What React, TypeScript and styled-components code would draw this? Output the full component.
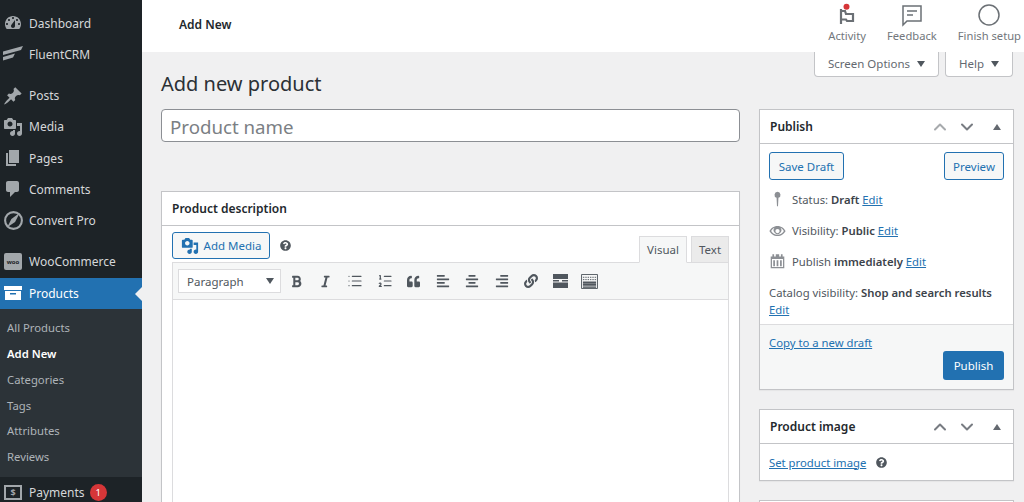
import React from "react";
import styled, { createGlobalStyle } from "styled-components";
import { ChevronUp, ChevronDown, List, ListOrdered } from "lucide-react";
import { FaBold, FaItalic, FaQuoteLeft, FaAlignLeft, FaAlignCenter, FaAlignRight, FaLink, FaQuestionCircle } from "react-icons/fa";

const Global = createGlobalStyle`
  html, body { margin: 0; padding: 0; height: 100%; overflow: hidden; }
  body { font-family: "Noto Sans", "Open Sans", "Liberation Sans", sans-serif; font-size: 12px; color: #3c434a; background: #f0f0f1; }
  * { box-sizing: border-box; }
`;

const Shell = styled.div`display: grid; grid-template-columns: 142px 1fr; width: 1024px; height: 502px; overflow: hidden;`;
const Sidebar = styled.nav`background: #1d2327; padding-top: 7.5px; display: flex; flex-direction: column; height: 502px; overflow: hidden;`;
const MenuItem = styled.div<{ $active?: boolean; $gap?: boolean }>`
  position: relative; flex: none; height: 31.25px; display: flex; align-items: center; font-size: 12px;
  margin-top: ${p => (p.$gap ? "10px" : "0")};
  background: ${p => (p.$active ? "#2271b1" : "transparent")};
  color: ${p => (p.$active ? "#fff" : "#d5d7d9")};
  ${p => p.$active && `&::after { content: ""; position: absolute; right: 0; top: 9px; border: 7px solid transparent; border-right-color: #f0f0f1; border-left-width: 0; }`}
`;
const MenuIcon = styled.span<{ $active?: boolean }>`
  width: 29px; flex: none; display: flex; justify-content: center; padding-right: 3px; color: ${p => (p.$active ? "#fff" : "#a2a7ab")};
`;
const SubMenu = styled.div`flex: none; height: 168.500px; background: #2c3338; padding-top: 6px; display: flex; flex-direction: column;`;
const SubItem = styled.div<{ $current?: boolean }>`
  height: 25.8px; display: flex; align-items: center; padding-left: 7px; font-size: 11.3px;
  color: ${p => (p.$current ? "#fff" : "#aeb3b8")}; font-weight: ${p => (p.$current ? 600 : 400)};
`;
const Badge = styled.span`
  margin-left: 5px; width: 17px; height: 17px; border-radius: 50%; background: #d63638; color: #fff; font-size: 9.5px;
  display: flex; align-items: center; justify-content: center;
`;
const WooMark = styled.span`
  width: 18px; height: 17px; background: #a2a7ab; border-radius: 2px; color: #1d2327; font-size: 6px; font-weight: 700; display: flex; align-items: center; justify-content: center;
`;
const PayMark = styled.span`
  width: 18px; height: 15px; border: 2px solid #a2a7ab; color: #a2a7ab; font-size: 9px; font-weight: 700; line-height: 1; display: flex; align-items: center; justify-content: center;
`;

const Main = styled.main`display: flex; flex-direction: column; min-width: 0;`;
const TopBar = styled.header`flex: none; height: 52px; background: #fff; display: flex; align-items: flex-start; justify-content: space-between; padding: 0 3px 0 37px;`;
const PageCrumb = styled.span`font-size: 12px; font-weight: 600; color: #23282d; line-height: 50px;`;
const Activities = styled.div`display: flex; gap: 21px; align-items: flex-start; padding-top: 3px;`;
const Activity = styled.div`display: flex; flex-direction: column; align-items: center; color: #72777c; font-size: 11.2px; line-height: 16px; gap: 1px;`;
const MetaRow = styled.div`flex: none; height: 25px; display: flex; justify-content: flex-end; gap: 6px; padding-right: 11px;`;
const MetaTab = styled.div`
  background: #fff; border: 1px solid #c3c4c7; border-top: 0; border-radius: 0 0 4px 4px; display: flex; align-items: center; justify-content: center;
  font-size: 11.5px; color: #646970; gap: 7px; padding-bottom: 1px;
`;
const ScreenTab = styled(MetaTab)`width: 125px;`;
const HelpTab = styled(MetaTab)`width: 68px;`;
const Caret = styled.i`width: 0; height: 0; border: 4px solid transparent; border-top: 6px solid #50575e; border-bottom: 0;`;
const Title = styled.h1`margin: -9.5px 0 0 19px; font-size: 20px; font-weight: 400; line-height: 31px; color: #2b3035;`;
const Columns = styled.div`display: grid; grid-template-columns: 579px 255px; gap: 19px; margin: 10.5px 0 0 19px; align-items: start;`;
const LeftCol = styled.div`display: flex; flex-direction: column; gap: 49px;`;
const RightCol = styled.div`display: flex; flex-direction: column; gap: 19px;`;
const NameInput = styled.input`
  height: 33px; width: 100%; border: 1px solid #8c8f94; border-radius: 4px; background: #fff; font: inherit; font-size: 18.7px; padding: 2px 8px 0; outline: 0;
  &::placeholder { color: #7b7f84; opacity: 1; }
`;
const Box = styled.section`background: #fff; border: 1px solid #c3c4c7; box-shadow: 0 1px 1px rgba(0,0,0,.04);`;
const BoxHeader = styled.div`
  height: 34px; border-bottom: 1px solid #c3c4c7; display: flex; align-items: center; justify-content: space-between; padding: 0 11px 0 10px;
  font-size: 12px; font-weight: 600; color: #23282d;
`;
const HandleGroup = styled.div`display: flex; align-items: center; gap: 7px; margin-right: -1px;`;
const SortIcon = styled.span<{ $dim?: boolean }>`display: flex; color: ${p => (p.$dim ? "#a7aaad" : "#787c82")};`;
const Toggle = styled.i`width: 0; height: 0; margin-left: 9px; margin-right: 2px; border: 4px solid transparent; border-bottom: 6px solid #646970; border-top: 0;`;
const EditorWrap = styled.div`padding: 0 10px; height: 300px;`;
const EditorTools = styled.div`height: 36px; display: flex; justify-content: space-between; align-items: flex-end;`;
const MediaGroup = styled.div`display: flex; align-items: center; align-self: flex-start; margin-top: 6px; gap: 10px;`;
const OutlineButton = styled.button`
  height: 27px; border: 1px solid #2271b1; border-radius: 3px; background: #f6f7f7; color: #2271b1; font: inherit; font-size: 11.5px;
  display: flex; align-items: center; justify-content: center; gap: 5px; padding: 0;
`;
const AddMedia = styled(OutlineButton)`width: 98px;`;
const SaveDraft = styled(OutlineButton)`width: 75px; height: 28px;`;
const PreviewBtn = styled(OutlineButton)`width: 60px; height: 28px;`;
const Tabs = styled.div`display: flex; gap: 4px; margin-bottom: -1px; position: relative;`;
const Tab = styled.div<{ $on?: boolean }>`
  height: 27px; display: flex; align-items: center; justify-content: center; font-size: 11.5px; color: #50575e; padding-bottom: 1px;
  border: 1px solid #dcdcde; width: ${p => (p.$on ? "48px" : "38px")};
  background: ${p => (p.$on ? "#f6f7f7" : "#ebebeb")}; border-bottom-color: ${p => (p.$on ? "#f6f7f7" : "#dcdcde")};
`;
const EditorFrame = styled.div`border: 1px solid #dcdcde; height: 264px;`;
const Toolbar = styled.div`height: 37px; background: #f6f7f7; border-bottom: 1px solid #dcdcde; display: flex; align-items: center; padding: 0 5px;`;
const Select = styled.div`
  width: 103px; height: 24px; background: #fff; border: 1px solid #dcdcde; display: flex; align-items: center; justify-content: space-between;
  padding: 0 6px 0 8px; font-size: 11.5px; color: #50575e; margin-right: 1px;
`;
const ToolBtn = styled.span`width: 29.3px; display: flex; justify-content: center; color: #50575e;`;
const PublishBody = styled.div`padding: 8px 9px 0;`;
const ButtonRow = styled.div`display: flex; justify-content: space-between; margin-bottom: 4px;`;
const Misc = styled.div`display: flex; align-items: center; height: 31px; font-size: 11.3px; color: #50575e; gap: 6px;`;
const MiscIcon = styled.span`width: 17px; flex: none; display: flex; justify-content: center; color: #8c8f94;`;
const Catalog = styled.div`font-size: 11.3px; line-height: 17px; color: #50575e; padding-top: 7px; height: 47px;`;
const Strong = styled.b`font-weight: 600; color: #3c434a;`;
const Link = styled.a`color: #2271b1; text-decoration: underline; font-size: 11.3px;`;
const Footer = styled.div`background: #f6f7f7; border-top: 1px solid #dcdcde; height: 65px; padding: 10px 9px 0; display: flex; flex-direction: column;`;
const PublishBtn = styled.button`
  align-self: flex-end; margin-top: 1px; width: 61px; height: 29px; background: #2271b1; border: 0; border-radius: 3px; color: #fff; font: inherit; font-size: 11.5px;
`;
const ImageBody = styled.div`height: 36px; padding: 0 9px; display: flex; align-items: center; gap: 10px; color: #50575e;`;
const NextBox = styled(Box)`height: 20px;`;

const D = ({ d, s = 20 }: { d: string; s?: number }) => (
  <svg width={s} height={s} viewBox="0 0 20 20" fill="currentColor" fillRule="evenodd"><path d={d} /></svg>
);
const P = {
  dash: "M3.76 16h12.48c1.1-1.37 1.76-3.11 1.76-5 0-4.42-3.58-8-8-8s-8 3.58-8 8c0 1.89.66 3.63 1.76 5zM10 4c.55 0 1 .45 1 1s-.45 1-1 1-1-.45-1-1 .45-1 1-1zM6 6c.55 0 1 .45 1 1s-.45 1-1 1-1-.45-1-1 .45-1 1-1zm8 0c.55 0 1 .45 1 1s-.45 1-1 1-1-.45-1-1 .45-1 1-1zm-5.37 5.55L12 7v6c0 1.1-.9 2-2 2s-2-.9-2-2c0-.57.24-1.08.63-1.45zM4 10c.55 0 1 .45 1 1s-.45 1-1 1-1-.45-1-1 .45-1 1-1zm12 0c.55 0 1 .45 1 1s-.45 1-1 1-1-.45-1-1 .45-1 1-1z",
  post: "M10.44 3.02l1.82-1.82 6.36 6.35-1.83 1.82c-1.05-.68-2.48-.57-3.41.36l-.75.75c-.92.93-1.04 2.35-.35 3.41l-1.83 1.82-2.41-2.41-2.8 2.79c-.42.42-3.38 2.71-3.8 2.29s1.86-3.39 2.28-3.81l2.79-2.79L4.1 9.36l1.83-1.82c1.05.69 2.48.57 3.4-.36l.75-.75c.93-.92 1.05-2.35.36-3.41z",
  media: "M13 11V4c0-.55-.45-1-1-1h-1.67L9 1H5L3.67 3H2c-.55 0-1 .45-1 1v7c0 .55.45 1 1 1h10c.55 0 1-.45 1-1zM7 4.5c1.38 0 2.5 1.12 2.5 2.5S8.38 9.5 7 9.5 4.5 8.38 4.5 7 5.62 4.5 7 4.5zM14 6h5v10.5c0 1.38-1.12 2.5-2.5 2.5S14 17.88 14 16.5s1.12-2.5 2.5-2.5c.17 0 .34.02.5.05V9h-3V6zm-4 8.05V13h2v3.5c0 1.38-1.12 2.5-2.5 2.5S7 17.88 7 16.5 8.12 14 9.5 14c.17 0 .34.02.5.05z",
  page: "M6 15V2h10v13H6zm-1 1h8v2H3V5h2v11z",
  comment: "M5 2h9c1.1 0 2 .9 2 2v7c0 1.1-.9 2-2 2h-2l-5 5v-5H5c-1.1 0-2-.9-2-2V4c0-1.1.9-2 2-2z",
  box: "M1 3h18v4H1zM2 8h16v9H2zM7 10v1.5h6V10z",
  pin: "M10 1a3.6 3.6 0 0 1 1.1 7L10.6 18h-1.2L8.900 8A3.6 3.6 0 0 1 10 1z",
  eye: "M10 4C5.500 4 2 7 .5 10c1.500 3 5 6 9.500 6s8-3 9.500-6C18 7 14.500 4 10 4zm0 10.500c-3.300 0-6-2-7.500-4.500C3.500 8.300 5 7 6.500 6.200a4.500 4.500 0 1 0 7 0C15 7 16.500 8.300 17.500 10c-1.500 2.500-4.200 4.500-7.500 4.500zM10 7.500a2.500 2.500 0 1 1 0 5 2.500 2.500 0 0 1 0-5z",
  cal: "M4 1.500h2V4h2V1.500h4V4h2V1.500h2V4h2v14H2V4h2zM3.500 7v9.500h13V7zM5 8.500h2v7H5zM9 8.500h2v7H9zM13 8.500h2v7h-2z",
};
const Fluent = () => (
  <svg width="22" height="18" viewBox="0 0 22 18" fill="#a2a7ab"><path d="M1 6.500 21 1 19 5 1 10zM1 12 13 8.500 11 12.500 1 15.500z" /></svg>
);
const Compass = () => (
  <svg width="21" height="21" viewBox="0 0 20 20" fill="none" stroke="#a2a7ab" strokeWidth="2"><circle cx="10" cy="10" r="8" /><path d="M16 2.500 8 8.500 4 16.500l7.500-5z" fill="#a2a7ab" stroke="none" /></svg>
);
const Flag = () => (
  <svg width="24" height="24" viewBox="0 0 24 24" fill="none" stroke="#6b7075" strokeWidth="2.200"><path d="M6 21V6M6 8h4l1 3h7v7h-6l-1-1.500H6" /><circle cx="11.500" cy="3.800" r="3" fill="#d63638" stroke="none" /></svg>
);
const Feedback = () => (
  <svg width="24" height="24" viewBox="0 0 24 24" fill="none" stroke="#6b7075" strokeWidth="1.500"><path d="M3 3h18v15H7l-4 4zM7 8h10M7 12h6" /></svg>
);
const Ring = () => (
  <svg width="24" height="24" viewBox="0 0 24 24" fill="none" stroke="#6b7075" strokeWidth="1.500"><circle cx="12" cy="12" r="10" /></svg>
);
const ReadMore = () => (
  <svg width="15" height="14" viewBox="0 0 15 14" fill="currentColor"><path d="M0 0h15v5H0zM0 6h6v1.500H0zM9 6h6v1.500H9zM0 8.500h15V14H0z" /></svg>
);
const Sink = () => (
  <svg width="17" height="15" viewBox="0 0 18 16" fill="none" stroke="currentColor"><path d="M.5.500h17v15H.5z" /><path d="M2 3.500h14M2 6h14" strokeDasharray="1.500 1" /><path d="M2 9h14M2 11.500h14" strokeWidth="2" /><path d="M2 14h14" strokeWidth="1.500" /></svg>
);

const Handles = ({ dim }: { dim?: boolean }) => (
  <HandleGroup>
    <SortIcon $dim={dim}><ChevronUp size={20} strokeWidth={2.400} /></SortIcon>
    <SortIcon><ChevronDown size={20} strokeWidth={2.400} /></SortIcon>
    <Toggle />
  </HandleGroup>
);

export default function App() {
  return (
    <Shell>
      <Global />
      <Sidebar>
        <MenuItem><MenuIcon><D d={P.dash} /></MenuIcon>Dashboard</MenuItem>
        <MenuItem><MenuIcon><Fluent /></MenuIcon>FluentCRM</MenuItem>
        <MenuItem $gap><MenuIcon><D d={P.post} /></MenuIcon>Posts</MenuItem>
        <MenuItem><MenuIcon><D d={P.media} /></MenuIcon>Media</MenuItem>
        <MenuItem><MenuIcon><D d={P.page} /></MenuIcon>Pages</MenuItem>
        <MenuItem><MenuIcon><D d={P.comment} /></MenuIcon>Comments</MenuItem>
        <MenuItem><MenuIcon><Compass /></MenuIcon>Convert Pro</MenuItem>
        <MenuItem $gap><MenuIcon><WooMark>woo</WooMark></MenuIcon>WooCommerce</MenuItem>
        <MenuItem $active><MenuIcon $active><D d={P.box} /></MenuIcon>Products</MenuItem>
        <SubMenu>
          <SubItem>All Products</SubItem>
          <SubItem $current>Add New</SubItem>
          <SubItem>Categories</SubItem>
          <SubItem>Tags</SubItem>
          <SubItem>Attributes</SubItem>
          <SubItem>Reviews</SubItem>
        </SubMenu>
        <MenuItem><MenuIcon><PayMark>$</PayMark></MenuIcon>Payments<Badge>1</Badge></MenuItem>
      </Sidebar>
      <Main>
        <TopBar>
          <PageCrumb>Add New</PageCrumb>
          <Activities>
            <Activity><Flag />Activity</Activity>
            <Activity><Feedback />Feedback</Activity>
            <Activity><Ring />Finish setup</Activity>
          </Activities>
        </TopBar>
        <MetaRow>
          <ScreenTab>Screen Options <Caret /></ScreenTab>
          <HelpTab>Help <Caret /></HelpTab>
        </MetaRow>
        <Title>Add new product</Title>
        <Columns>
          <LeftCol>
            <NameInput placeholder="Product name" readOnly />
            <Box>
              <BoxHeader>Product description</BoxHeader>
              <EditorWrap>
                <EditorTools>
                  <MediaGroup>
                    <AddMedia><D d={P.media} s={18} />Add Media</AddMedia>
                    <FaQuestionCircle size={11} color="#50575e" />
                  </MediaGroup>
                  <Tabs><Tab $on>Visual</Tab><Tab>Text</Tab></Tabs>
                </EditorTools>
                <EditorFrame>
                  <Toolbar>
                    <Select>Paragraph <Caret /></Select>
                    <ToolBtn><FaBold size={13} /></ToolBtn>
                    <ToolBtn><FaItalic size={13} /></ToolBtn>
                    <ToolBtn><List size={16} strokeWidth={1.800} /></ToolBtn>
                    <ToolBtn><ListOrdered size={16} strokeWidth={1.800} /></ToolBtn>
                    <ToolBtn><FaQuoteLeft size={13} /></ToolBtn>
                    <ToolBtn><FaAlignLeft size={14} /></ToolBtn>
                    <ToolBtn><FaAlignCenter size={14} /></ToolBtn>
                    <ToolBtn><FaAlignRight size={14} /></ToolBtn>
                    <ToolBtn><FaLink size={14} /></ToolBtn>
                    <ToolBtn><ReadMore /></ToolBtn>
                    <ToolBtn><Sink /></ToolBtn>
                  </Toolbar>
                </EditorFrame>
              </EditorWrap>
            </Box>
          </LeftCol>
          <RightCol>
            <Box>
              <BoxHeader>Publish<Handles dim /></BoxHeader>
              <PublishBody>
                <ButtonRow><SaveDraft>Save Draft</SaveDraft><PreviewBtn>Preview</PreviewBtn></ButtonRow>
                <Misc><MiscIcon><D d={P.pin} s={17} /></MiscIcon><span>Status: <Strong>Draft</Strong> <Link>Edit</Link></span></Misc>
                <Misc><MiscIcon><D d={P.eye} s={18} /></MiscIcon><span>Visibility: <Strong>Public</Strong> <Link>Edit</Link></span></Misc>
                <Misc><MiscIcon><D d={P.cal} s={17} /></MiscIcon><span>Publish <Strong>immediately</Strong> <Link>Edit</Link></span></Misc>
                <Catalog>Catalog visibility: <Strong>Shop and search results</Strong><br /><Link>Edit</Link></Catalog>
              </PublishBody>
              <Footer>
                <Link>Copy to a new draft</Link>
                <PublishBtn>Publish</PublishBtn>
              </Footer>
            </Box>
            <Box>
              <BoxHeader>Product image<Handles /></BoxHeader>
              <ImageBody><Link>Set product image</Link><FaQuestionCircle size={11} /></ImageBody>
            </Box>
            <NextBox />
          </RightCol>
        </Columns>
      </Main>
    </Shell>
  );
}
